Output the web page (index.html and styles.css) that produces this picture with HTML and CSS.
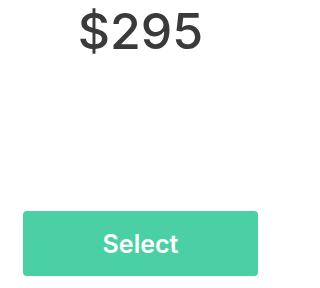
FILE: index.html
```html
<!DOCTYPE html>
<html>
<head>
<meta charset="utf-8">
<link rel="stylesheet" href="styles.css">
</head>
<body>
<div class="card">
  <div class="price">$295</div>
  <button class="select">Select</button>
</div>
</body>
</html>
```
FILE: styles.css
```css
html, body {
  margin: 0;
  padding: 0;
  background: #ffffff;
}
.card {
  width: 281px;
  height: 288px;
  display: flex;
  flex-direction: column;
  align-items: center;
  font-family: Inter, "Noto Sans", sans-serif;
}
.price {
  margin-top: 1px;
  font-size: 50px;
  line-height: 60px;
  color: #3a3a3a;
  font-weight: 500;
}
.select {
  margin-top: 150px;
  width: 235px;
  height: 65px;
  border: none;
  border-radius: 4px;
  background: #4bcfa4;
  color: #ffffff;
  font-family: Inter, "Noto Sans", sans-serif;
  font-size: 25px;
  font-weight: 600;
}
```
